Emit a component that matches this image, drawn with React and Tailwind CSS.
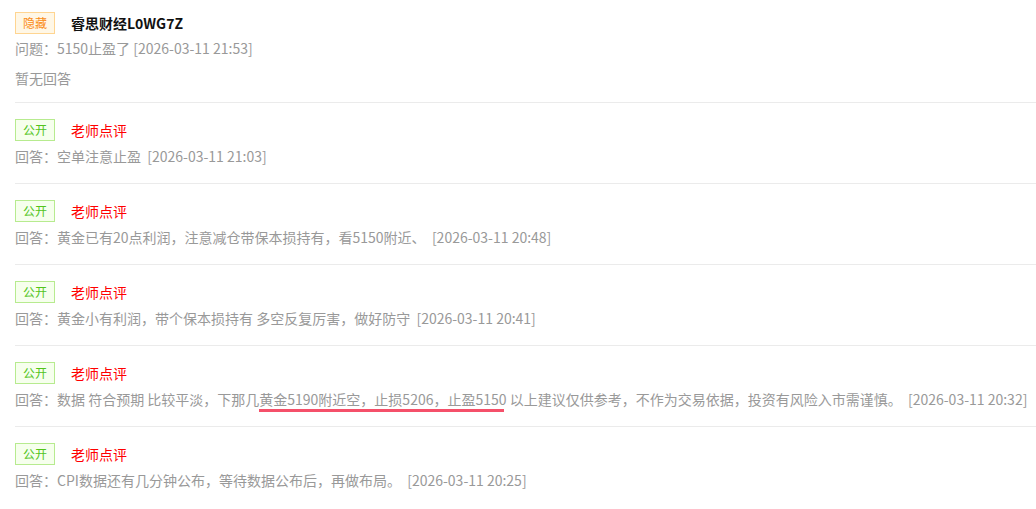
import React from "react";

const font = { fontFamily: '"Noto Sans CJK SC", "Noto Sans", sans-serif' };

function Badge({ type }) {
  if (type === "hidden") {
    return (
      <span className="inline-flex h-[22px] w-[40px] items-center justify-center border border-[#ffd591] bg-[#fff7e6] text-[12px] text-[#fa8c16]">
        隐藏
      </span>
    );
  }
  return (
    <span className="inline-flex h-[22px] w-[40px] items-center justify-center border border-[#b7eb8f] bg-[#f6ffed] text-[12px] text-[#52c41a]">
      公开
    </span>
  );
}

function Item({ answer, last }) {
  return (
    <div className={last ? "pt-[16px] pb-[15px]" : "border-b border-[#ebebeb] pt-[16px] pb-[15px]"}>
      <div className="flex h-[22px] items-center gap-[16px]">
        <Badge type="public" />
        <span className="text-[14px] text-[#ff0000]">老师点评</span>
      </div>
      <div className="mt-[3px] h-[24px] text-[14px] leading-[24px] whitespace-pre text-[#999]">
        {answer}
      </div>
    </div>
  );
}

export default function App() {
  return (
    <div className="w-[1036px] h-[509px] overflow-hidden bg-white pl-[15px]" style={font}>
      <div className="border-b border-[#ebebeb] pt-[12px] pb-[12px]">
        <div className="flex h-[22px] items-center gap-[16px]">
          <Badge type="hidden" />
          <span className="text-[14px] font-bold text-[#111]">睿思财经L0WG7Z</span>
        </div>
        <div className="mt-[2px] h-[24px] text-[14px] leading-[24px] text-[#999] whitespace-pre">
          问题：5150止盈了 [2026-03-11 21:53]
        </div>
        <div className="mt-[6px] h-[24px] text-[14px] leading-[24px] text-[#999]">暂无回答</div>
      </div>
      <Item answer={"回答：空单注意止盈  [2026-03-11 21:03]"} />
      <Item answer={"回答：黄金已有20点利润，注意减仓带保本损持有，看5150附近、  [2026-03-11 20:48]"} />
      <Item answer={"回答：黄金小有利润，带个保本损持有 多空反复厉害，做好防守  [2026-03-11 20:41]"} />
      <Item
        answer={
          <>
            {"回答：数据 符合预期 比较平淡，下那几"}
            <span className="relative">
              黄金5190附近空，止损5206，止盈5150
              <span className="absolute left-0 right-[3px] top-[20px] h-[3px] bg-[#f5506a]" />
            </span>
            {" 以上建议仅供参考，不作为交易依据，投资有风险入市需谨慎。  [2026-03-11 20:32]"}
          </>
        }
      />
      <Item last answer={"回答：CPI数据还有几分钟公布，等待数据公布后，再做布局。  [2026-03-11 20:25]"} />
    </div>
  );
}
